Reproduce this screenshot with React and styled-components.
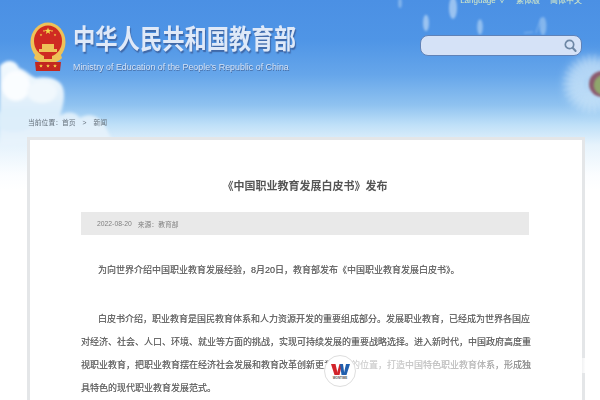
import React from "react";
import styled, { createGlobalStyle } from "styled-components";

const Global = createGlobalStyle`
  html, body { margin: 0; padding: 0; background: #fff; }
  body { font-family: "Liberation Sans", "Noto Sans CJK SC", sans-serif; }
`;

const Page = styled.div`
  position: relative;
  width: 600px;
  height: 400px;
  overflow: hidden;
  display: flex;
  flex-direction: column;
  background: linear-gradient(180deg, #4b90e4 0, #4f95e6 40px, #66a6ea 75px, #8fc2f0 105px, #bfe0f8 125px, #e6f3fc 145px, #fbfdff 175px, #fff 190px);
`;

const Backdrop = styled.svg`
  position: absolute;
  left: 0;
  top: 0;
  pointer-events: none;
`;

const TopLinks = styled.div`
  position: relative;
  flex: none;
  height: 6px;
  display: flex;
  justify-content: flex-end;
  align-items: center;
  gap: 10px;
  padding-right: 18px;
  margin-top: -2px;
  font-size: 8px;
  line-height: 8px;
  color: #d9ecc6;
  filter: blur(0.6px);
`;

const Masthead = styled.div`
  position: relative;
  flex: none;
  display: flex;
  align-items: flex-start;
  padding: 18px 18px 0 30px;
  height: 95px;
  box-sizing: border-box;
`;

const Emblem = styled.svg`
  flex: none;
  width: 36px;
  height: 50px;
  filter: blur(0.6px);
`;

const Brand = styled.div`
  margin-left: 7px;
  width: 226px;
  flex: none;
  display: flex;
  flex-direction: column;
`;

const BrandName = styled.div`
  font-size: 22.3px;
  line-height: 27px;
  margin-top: 5px;
  height: 28px;
  font-weight: 700;
  white-space: nowrap;
  color: #dfe9f8;
  transform: scaleY(1.2);
  transform-origin: 0 50%;
  text-shadow: 1px 1px 1px #3f68a8;
  filter: blur(0.5px);
`;

const BrandSub = styled.div`
  margin-top: 7px;
  font-size: 8.9px;
  line-height: 10px;
  white-space: nowrap;
  color: #d4e3f7;
  text-shadow: 0.5px 0.5px 0.5px #45699f;
  filter: blur(0.6px);
`;

const SearchBox = styled.div`
  margin-left: auto;
  margin-top: 13px;
  width: 162px;
  height: 21px;
  box-sizing: border-box;
  border: 1px solid #5f82b8;
  border-radius: 8px;
  background: #d5e2f7;
  display: flex;
  align-items: center;
  justify-content: flex-end;
  padding-right: 3px;
  filter: blur(0.4px);
`;

const Crumbs = styled.div`
  position: relative;
  flex: none;
  height: 38px;
  padding: 19px 0 0 28px;
  box-sizing: border-box;
  display: flex;
  gap: 7px;
  font-size: 6.8px;
  line-height: 9px;
  color: #66717c;
  filter: blur(0.5px);
`;

const Card = styled.main`
  position: relative;
  flex: 1 0 auto;
  margin: 0 15px 0 27px;
  background: #fff;
  border: 3px solid #e4e6e8;
  border-bottom: none;
  padding: 0 53px 0 51px;
`;

const Title = styled.h1`
  margin: 38px 0 0;
  font-size: 11px;
  line-height: 16px;
  font-weight: 700;
  text-align: center;
  color: #555;
  filter: blur(0.5px);
`;

const MetaBar = styled.div`
  margin-top: 18px;
  height: 23px;
  background: #e9e9e9;
  display: flex;
  align-items: center;
  gap: 6px;
  padding-left: 16px;
  font-size: 6.8px;
  color: #808080;
  filter: blur(0.4px);
`;

const Body = styled.article`
  margin-top: 24px;
  font-size: 9px;
  line-height: 23px;
  color: #666;
  text-shadow: 0 0 0.6px #777;
  filter: blur(0.5px);
`;

const Para = styled.p`
  margin: 0 0 26px;
`;

const Line = styled.div`
  white-space: nowrap;
  text-align: justify;
  text-align-last: ${(p) => (p.$end ? "left" : "justify")};
  padding-left: ${(p) => (p.$indent ? "17px" : "0")};
`;

const Haze = styled.div`
  position: absolute;
  left: 352px;
  top: 358px;
  width: 248px;
  height: 15px;
  background: linear-gradient(90deg, rgba(255,255,255,0.72), rgba(255,255,255,0.55) 50%, rgba(255,255,255,0.2) 72%, rgba(255,255,255,0.25) 92%, rgba(255,255,255,0.9) 94%);
`;

const Badge = styled.div`
  position: absolute;
  left: 324px;
  top: 355px;
  width: 32px;
  height: 32px;
  box-sizing: border-box;
  border: 1.5px solid #dedede;
  border-radius: 50%;
  background: #fff;
  display: flex;
  flex-direction: column;
  align-items: center;
  padding-top: 7px;
`;

const BadgeMark = styled.svg`
  width: 19px;
  height: 13px;
`;

const BadgeText = styled.span`
  font-size: 3px;
  line-height: 4px;
  font-weight: 700;
  color: #555;
`;

const Star = ({ x, y, r, c = "#f4d84a" }) => {
  const pts = Array.from({ length: 10 }, (_, i) => {
    const a = (Math.PI / 5) * i - Math.PI / 2;
    const rr = i % 2 ? r * 0.42 : r;
    return `${x + rr * Math.cos(a)},${y + rr * Math.sin(a)}`;
  }).join(" ");
  return <polygon points={pts} fill={c} />;
};

const Seed = ({ x, y, h = 14, o = 0.6 }) => (
  <g opacity={o}>
    <ellipse cx={x} cy={y} rx={h * 0.2} ry={h * 0.55} fill="#d8ebfb" />
  </g>
);

export default function App() {
  return (
    <Page>
      <Global />
      <Backdrop width="600" height="200" viewBox="0 0 600 200">
        <defs>
          <filter id="soft" x="-20%" y="-20%" width="140%" height="140%"><feGaussianBlur stdDeviation="1.6" /></filter>
          <filter id="soft1" x="-20%" y="-20%" width="140%" height="140%"><feGaussianBlur stdDeviation="1" /></filter>
          <filter id="soft4" x="-40%" y="-40%" width="180%" height="180%"><feGaussianBlur stdDeviation="5" /></filter>
          <linearGradient id="cloud" x1="0" y1="0" x2="0" y2="1">
            <stop offset="0" stopColor="#f4fafe" />
            <stop offset="0.6" stopColor="#dcedfa" />
            <stop offset="1" stopColor="#e9f4fc" />
          </linearGradient>
        </defs>
        <g filter="url(#soft)">
          <path d="M0 66 C6 58 16 60 19 68 C26 70 30 76 36 78 C46 76 60 78 63 88 C66 98 62 108 60 116 C68 110 76 112 80 118 C90 112 100 116 106 128 L112 140 L0 146 Z" fill="url(#cloud)" />
          <ellipse cx="16" cy="86" rx="14" ry="15" fill="#fbfdff" opacity="0.95" />
          <ellipse cx="42" cy="92" rx="15" ry="11" fill="#f1f8fd" opacity="0.95" />
          <ellipse cx="14" cy="120" rx="20" ry="12" fill="#dcedfa" opacity="0.8" />
        </g>
        <g filter="url(#soft4)">
          <circle cx="592" cy="84" r="27" fill="#cfe7f9" opacity="0.7" />
        </g>
        <g stroke="#e6f3fc" strokeWidth="0.6" opacity="0.4" filter="url(#soft1)">
          {Array.from({ length: 30 }, (_, i) => {
            const a = (Math.PI * 2 * i) / 30;
            return <line key={i} x1={592 + 9 * Math.cos(a)} y1={84 + 9 * Math.sin(a)} x2={592 + 30 * Math.cos(a)} y2={84 + 30 * Math.sin(a)} />;
          })}
        </g>
        <g filter="url(#soft1)" opacity="0.95">
          <circle cx="602" cy="84" r="13" fill="#8a5468" />
          <circle cx="604" cy="85" r="10" fill="#8ea565" />
        </g>
        <g filter="url(#soft1)">
          <Seed x={400} y={3} h={9} o={0.4} />
          <Seed x={453} y={8} h={20} o={0.55} />
          <Seed x={426} y={23} h={15} o={0.55} />
          <Seed x={480} y={27} h={14} o={0.5} />
          <Seed x={543} y={26} h={17} o={0.4} />
        </g>
        <path d="M536 33 L541 18 M533 32 L524 33" stroke="#d8ebfb" strokeWidth="1" opacity="0.4" filter="url(#soft1)" />
      </Backdrop>

      <TopLinks>
        <span>Language ∨</span>
        <span>繁体版</span>
        <span>简体中文</span>
      </TopLinks>

      <Masthead>
        <Emblem viewBox="0 0 36 50">
          <ellipse cx="18" cy="20" rx="17.5" ry="19.5" fill="#eec258" />
          <ellipse cx="18" cy="19" rx="14" ry="15.5" fill="#cf2a22" />
          <Star x={18} y={9} r={3.6} />
          <Star x={11} y={13} r={1.4} />
          <Star x={14} y={9} r={1.2} />
          <Star x={22} y={9} r={1.2} />
          <Star x={25} y={13} r={1.4} />
          <path d="M9 27 h18 v3 h-18 z M12 22 h12 v5 h-12 z" fill="#eec258" />
          <path d="M6 30 C11 38 25 38 30 30 L32 36 C26 43 10 43 4 36 Z" fill="#eec258" />
          <path d="M14 32 h8 v5 h-8 z" fill="#cf2a22" />
          <path d="M5 40 h26 l-1 9 h-24 z" fill="#c3271f" />
          <Star x={11} y={44} r={2} />
          <Star x={18} y={44} r={2} />
          <Star x={25} y={44} r={2} />
        </Emblem>
        <Brand>
          <BrandName>中华人民共和国教育部</BrandName>
          <BrandSub>Ministry of Education of the People's Republic of China</BrandSub>
        </Brand>
        <SearchBox>
          <svg width="15" height="15" viewBox="0 0 15 15" fill="none">
            <circle cx="6.5" cy="6.5" r="4.2" stroke="#6d87a5" strokeWidth="1.7" />
            <path d="M9.6 9.8 L12.6 13" stroke="#6d87a5" strokeWidth="2" strokeLinecap="round" />
          </svg>
        </SearchBox>
      </Masthead>

      <Crumbs>
        <span>当前位置：首页</span>
        <span>&gt;</span>
        <span>新闻</span>
      </Crumbs>

      <Card>
        <Title>《中国职业教育发展白皮书》发布</Title>
        <MetaBar>
          <span>2022-08-20</span>
          <span>来源：教育部</span>
        </MetaBar>
        <Body>
          <Para>
            <Line $indent $end>为向世界介绍中国职业教育发展经验，8月20日，教育部发布《中国职业教育发展白皮书》。</Line>
          </Para>
          <Para>
            <Line $indent>白皮书介绍，职业教育是国民教育体系和人力资源开发的重要组成部分。发展职业教育，已经成为世界各国应</Line>
            <Line>对经济、社会、人口、环境、就业等方面的挑战，实现可持续发展的重要战略选择。进入新时代，中国政府高度重</Line>
            <Line>视职业教育，把职业教育摆在经济社会发展和教育改革创新更为突出的位置，打造中国特色职业教育体系，形成独</Line>
            <Line $end>具特色的现代职业教育发展范式。</Line>
          </Para>
        </Body>
      </Card>

      <Haze />
      <Badge>
        <BadgeMark viewBox="0 0 19 13">
          <path d="M0 1 H4.5 L7 12 H3.5 Z" fill="#d2232a" />
          <path d="M5.5 12 L8.5 1 H11 L8.5 12 Z" fill="#d2232a" />
          <path d="M9 1 H12 L13.5 12 H10.5 Z" fill="#1f5fae" />
          <path d="M12.5 12 L15 1 H19 L15.5 12 Z" fill="#1f5fae" />
        </BadgeMark>
        <BadgeText>WONTIME</BadgeText>
      </Badge>
    </Page>
  );
}
